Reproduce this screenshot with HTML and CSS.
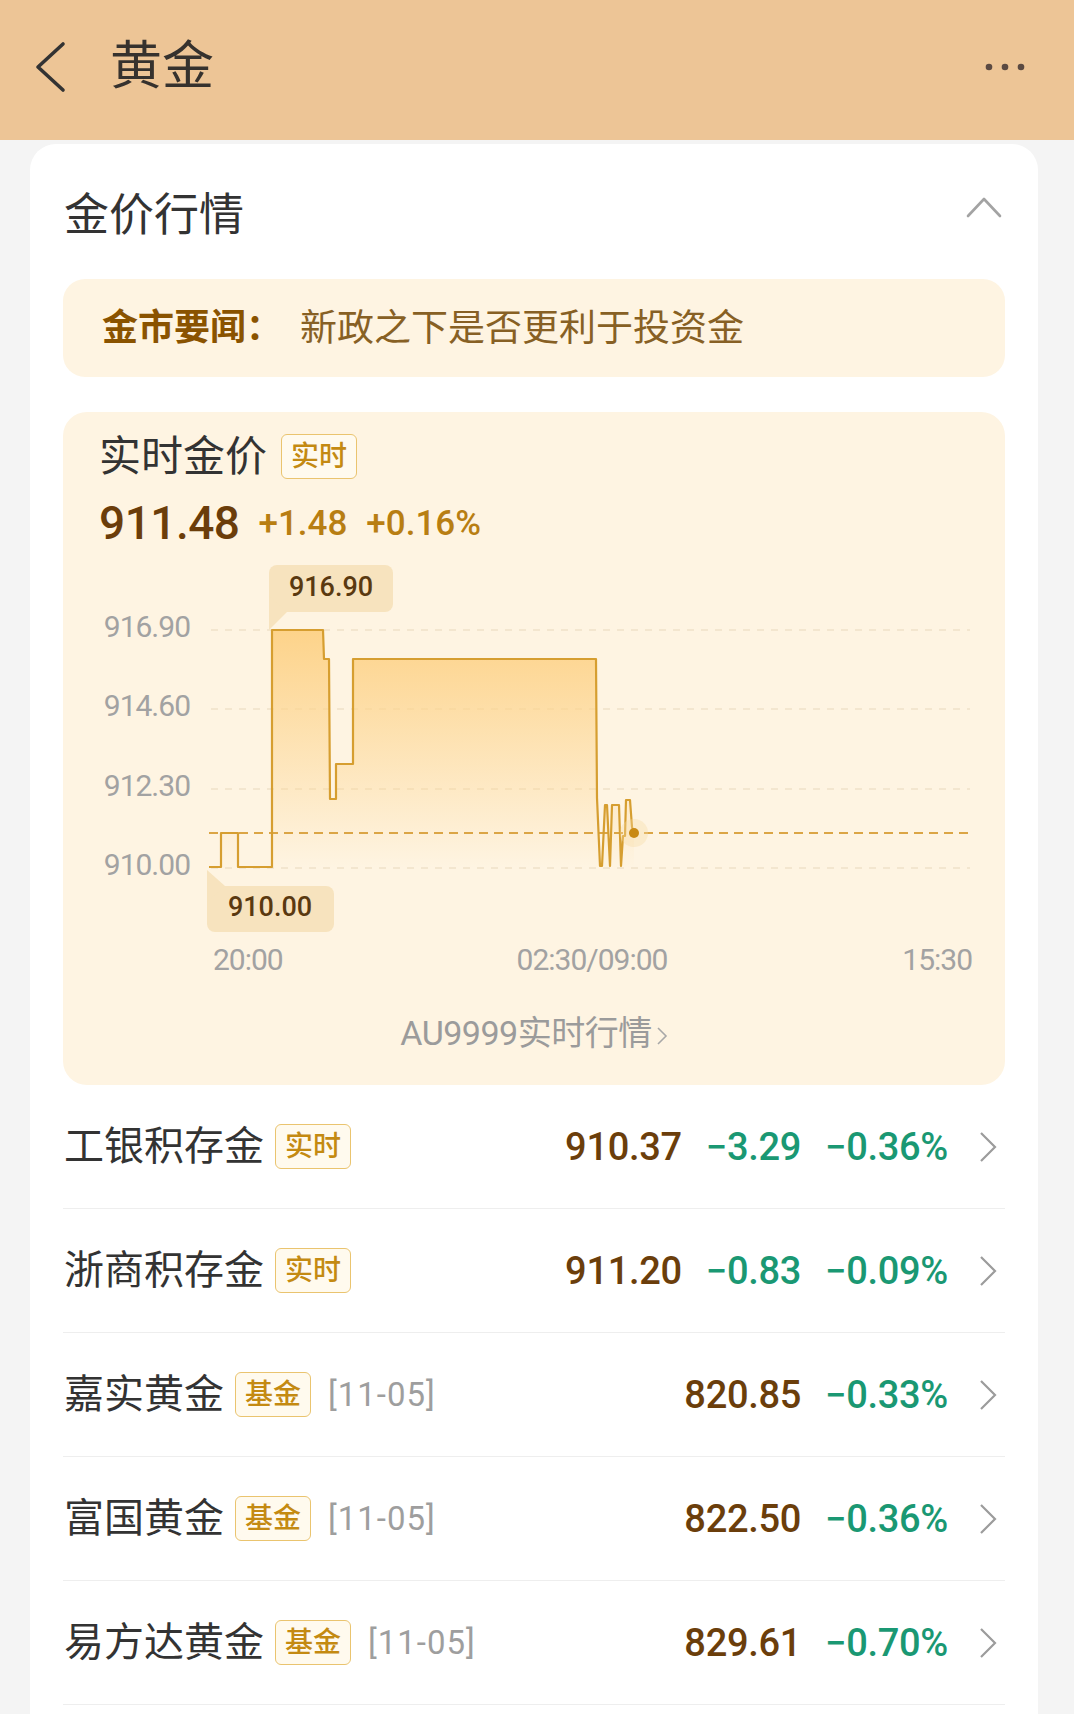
FILE: index.html
```html
<!DOCTYPE html>
<html lang="zh-CN">
<head>
  <meta charset="UTF-8">
  <title>黄金</title>
  <link rel="stylesheet" href="styles.css">
</head>
<body>
  <div class="topbar">
    <svg class="back" width="32" height="52" viewBox="0 0 32 52">
      <path d="M29 3 L4 26 L29 49" fill="none" stroke="#333" stroke-width="3.6" stroke-linecap="round" stroke-linejoin="round"/>
    </svg>
    <h1 class="title">黄金</h1>
    <svg class="more" width="40" height="8" viewBox="0 0 40 8">
      <circle cx="4" cy="4" r="3.3" fill="#5b4a42"/>
      <circle cx="20" cy="4" r="3.3" fill="#5b4a42"/>
      <circle cx="36" cy="4" r="3.3" fill="#5b4a42"/>
    </svg>
  </div>

  <div class="card">
    <div class="sec-head">
      <h2>金价行情</h2>
      <svg class="fold" width="36" height="22" viewBox="0 0 36 22">
        <path d="M2 20 L18 3 L34 20" fill="none" stroke="#a3a3a3" stroke-width="2.6" stroke-linecap="round" stroke-linejoin="round"/>
      </svg>
    </div>

    <div class="news">
      <span class="news-tag">金市要闻：</span>
      <span class="news-text">新政之下是否更利于投资金</span>
    </div>

    <div class="quote">
      <div class="quote-head">
        <span class="quote-title">实时金价</span>
        <span class="tag">实时</span>
      </div>
      <div class="quote-price">
        911.48<span class="up">+1.48</span><span class="up">+0.16%</span>
      </div>

      <svg class="chart" width="942" height="434" viewBox="0 0 942 434">
        <defs>
          <linearGradient id="area" x1="0" y1="74" x2="0" y2="312" gradientUnits="userSpaceOnUse">
            <stop offset="0" stop-color="#fdd38a" stop-opacity="1"/>
            <stop offset="1" stop-color="#fdd38a" stop-opacity="0"/>
          </linearGradient>
        </defs>
        <g class="grid">
          <line x1="148" y1="74" x2="907" y2="74"/>
          <line x1="148" y1="153" x2="907" y2="153"/>
          <line x1="148" y1="233" x2="907" y2="233"/>
          <line x1="148" y1="312" x2="907" y2="312"/>
        </g>
        <g class="ylab">
          <text x="127" y="81">916.90</text>
          <text x="127" y="160">914.60</text>
          <text x="127" y="240">912.30</text>
          <text x="127" y="319">910.00</text>
        </g>
        <path class="area" d="M146 311 L158 311 L158 277 L175 277 L175 311 L209 311 L209 74 L260 74 L261 103 L266 103 L267 243 L273 243 L273 208 L290 208 L290 103 L533 103 L534 242 L537 310 L539 310 L542 249 L544 249 L547 310 L549 249 L556 249 L558 310 L560 280 L562 280 L563 244 L567 244 L569 271 L571 277 L571 312 L146 312 Z"/>
        <line class="ref" x1="146" y1="277" x2="907" y2="277"/>
        <path class="line" d="M146 311 L158 311 L158 277 L175 277 L175 311 L209 311 L209 74 L260 74 L261 103 L266 103 L267 243 L273 243 L273 208 L290 208 L290 103 L533 103 L534 242 L537 310 L539 310 L542 249 L544 249 L547 310 L549 249 L556 249 L558 310 L560 280 L562 280 L563 244 L567 244 L569 271 L571 277"/>
        <circle class="halo" cx="571" cy="277" r="14"/>
        <circle class="dot" cx="571" cy="277" r="5"/>

        <g class="bubble">
          <rect x="206" y="9" width="124" height="47" rx="8"/>
          <polygon points="206,40 224,56 206,74"/>
          <text x="268" y="40">916.90</text>
        </g>
        <g class="bubble">
          <rect x="144" y="330" width="127" height="46" rx="8"/>
          <polygon points="144,314 144,346 162,330"/>
          <text x="207" y="360">910.00</text>
        </g>

        <g class="xlab">
          <text x="150" y="414">20:00</text>
          <text x="529" y="414" text-anchor="middle">02:30/09:00</text>
          <text x="909" y="414" text-anchor="end">15:30</text>
        </g>
      </svg>

      <div class="more-link">AU9999实时行情<svg width="12" height="20" viewBox="0 0 12 20"><path d="M2 2 L10 10 L2 18" fill="none" stroke="#a8a8a8" stroke-width="1.6"/></svg></div>
    </div>

    <div class="row">
      <span class="name">工银积存金</span>
      <span class="tag">实时</span>
      <div class="vals">
        <span class="price">910.37</span>
        <span class="down">−3.29</span>
        <span class="down">−0.36%</span>
      </div>
      <svg class="go" width="18" height="30" viewBox="0 0 18 30"><path d="M2 1 L16 15 L2 29" fill="none" stroke="#9c9c9c" stroke-width="2.2"/></svg>
    </div>
    <div class="row">
      <span class="name">浙商积存金</span>
      <span class="tag">实时</span>
      <div class="vals">
        <span class="price">911.20</span>
        <span class="down">−0.83</span>
        <span class="down">−0.09%</span>
      </div>
      <svg class="go" width="18" height="30" viewBox="0 0 18 30"><path d="M2 1 L16 15 L2 29" fill="none" stroke="#9c9c9c" stroke-width="2.2"/></svg>
    </div>
    <div class="row">
      <span class="name">嘉实黄金</span>
      <span class="tag">基金</span>
      <span class="date">[11-05]</span>
      <div class="vals">
        <span class="price">820.85</span>
        <span class="down">−0.33%</span>
      </div>
      <svg class="go" width="18" height="30" viewBox="0 0 18 30"><path d="M2 1 L16 15 L2 29" fill="none" stroke="#9c9c9c" stroke-width="2.2"/></svg>
    </div>
    <div class="row">
      <span class="name">富国黄金</span>
      <span class="tag">基金</span>
      <span class="date">[11-05]</span>
      <div class="vals">
        <span class="price">822.50</span>
        <span class="down">−0.36%</span>
      </div>
      <svg class="go" width="18" height="30" viewBox="0 0 18 30"><path d="M2 1 L16 15 L2 29" fill="none" stroke="#9c9c9c" stroke-width="2.2"/></svg>
    </div>
    <div class="row">
      <span class="name">易方达黄金</span>
      <span class="tag">基金</span>
      <span class="date">[11-05]</span>
      <div class="vals">
        <span class="price">829.61</span>
        <span class="down">−0.70%</span>
      </div>
      <svg class="go" width="18" height="30" viewBox="0 0 18 30"><path d="M2 1 L16 15 L2 29" fill="none" stroke="#9c9c9c" stroke-width="2.2"/></svg>
    </div>
  </div>
</body>
</html>
```

FILE: styles.css
```css
* {
    margin: 0;
    padding: 0;
    box-sizing: border-box;
}
body {
    background-color: #f4f4f4;
    font-family: Roboto, "Noto Sans CJK SC", sans-serif;
    color: #333;
}

/* top bar */
.topbar {
    height: 140px;
    background-color: #edc596;
    display: flex;
    align-items: center;
    padding: 0 49px 6px 34px;
}
.topbar .back {
    display: block;
}
.topbar .title {
    font-size: 52px;
    font-weight: 400;
    line-height: 1;
    margin-left: 44px;
    color: #36322e;
}
.topbar .more {
    margin-left: auto;
    display: block;
}

/* main card */
.card {
    background-color: #fff;
    margin: 4px 36px 0 30px;
    border-radius: 26px 26px 0 0;
    padding: 0 33px 40px;
}
.sec-head {
    height: 135px;
    display: flex;
    align-items: center;
    justify-content: space-between;
}
.sec-head h2 {
    font-size: 45px;
    font-weight: 400;
    line-height: 1;
    padding-left: 1px;
    margin-top: 7px;
}
.sec-head .fold {
    display: block;
    margin-right: 3px;
    margin-top: -10px;
}

.news {
    height: 98px;
    background-color: #fef4e2;
    border-radius: 22px;
    display: flex;
    align-items: center;
    padding-left: 39px;
}
.news-tag {
    font-size: 36px;
    font-weight: 700;
    color: #8a5300;
    line-height: 1;
}
.news-text {
    font-size: 37px;
    color: #876024;
    line-height: 1;
    margin-left: 18px;
}

/* realtime quote block */
.quote {
    margin-top: 35px;
    background-color: #fef4e2;
    border-radius: 24px;
    padding: 22px 0 35px;
}
.quote-head {
    display: flex;
    align-items: center;
    height: 45px;
    padding-left: 36px;
}
.quote-title {
    font-size: 42px;
    line-height: 1;
    color: #333;
}
.tag {
    display: inline-flex;
    align-items: center;
    justify-content: center;
    width: 76px;
    height: 45px;
    border: 1px solid #eac46f;
    border-radius: 6px;
    background-color: #fffaee;
    color: #c48a12;
    font-size: 28px;
    font-weight: 500;
    line-height: 1;
    margin-left: 14px;
    flex-shrink: 0;
}
.quote-price {
    margin-top: 21px;
    padding-left: 36px;
    height: 46px;
    font-size: 46px;
    line-height: 46px;
    font-weight: 500;
    letter-spacing: -0.5px;
    color: #6b3d0a;
}
.quote-price .up {
    font-size: 35px;
    line-height: 1;
    color: #b87e12;
    margin-left: 19px;
    letter-spacing: 0;
    vertical-align: 4px;
}

.chart {
    display: block;
    margin-top: 10px;
}
.chart .grid line {
    stroke: #f3e6cf;
    stroke-width: 2;
    stroke-dasharray: 7 7;
}
.chart .ylab text,
.chart .xlab text {
    font-family: Roboto, sans-serif;
    font-size: 30px;
    letter-spacing: -1px;
    fill: #a2a2a2;
}
.chart .ylab text {
    text-anchor: end;
}
.chart .area {
    fill: url(#area);
}
.chart .ref {
    stroke: #dba545;
    stroke-width: 2;
    stroke-dasharray: 9 6;
}
.chart .line {
    fill: none;
    stroke: #d69e30;
    stroke-width: 2.2;
    stroke-linejoin: round;
}
.chart .halo {
    fill: #f6d9a0;
    opacity: 0.35;
}
.chart .dot {
    fill: #c98a14;
}
.chart .bubble rect,
.chart .bubble polygon {
    fill: #f7e3be;
}
.chart .bubble text {
    font-family: Roboto, sans-serif;
    font-size: 27px;
    font-weight: 500;
    fill: #5a3910;
    text-anchor: middle;
}

.more-link {
    margin-top: 26px;
    text-align: center;
    font-size: 34px;
    line-height: 34px;
    color: #9b9b9b;
    letter-spacing: -0.5px;
}
.more-link svg {
    margin-left: 4px;
    vertical-align: -1px;
}

/* list rows */
.row {
    height: 124px;
    border-bottom: 1px solid #eeeeee;
    display: flex;
    align-items: center;
}
.row .name {
    font-size: 40px;
    line-height: 1;
    color: #333;
    padding-left: 1px;
}
.row .tag {
    margin-left: 11px;
}
.row .date {
    font-size: 33px;
    color: #9e9e9e;
    margin-left: 17px;
    letter-spacing: 1px;
}
.vals {
    margin-left: auto;
    display: flex;
    gap: 24px;
    font-size: 38px;
    font-weight: 500;
    letter-spacing: -0.3px;
}
.vals .price {
    color: #6b3e0b;
}
.vals .down {
    color: #1a9873;
}
.row .go {
    display: block;
    margin-left: 31px;
    margin-right: 8px;
}
```
